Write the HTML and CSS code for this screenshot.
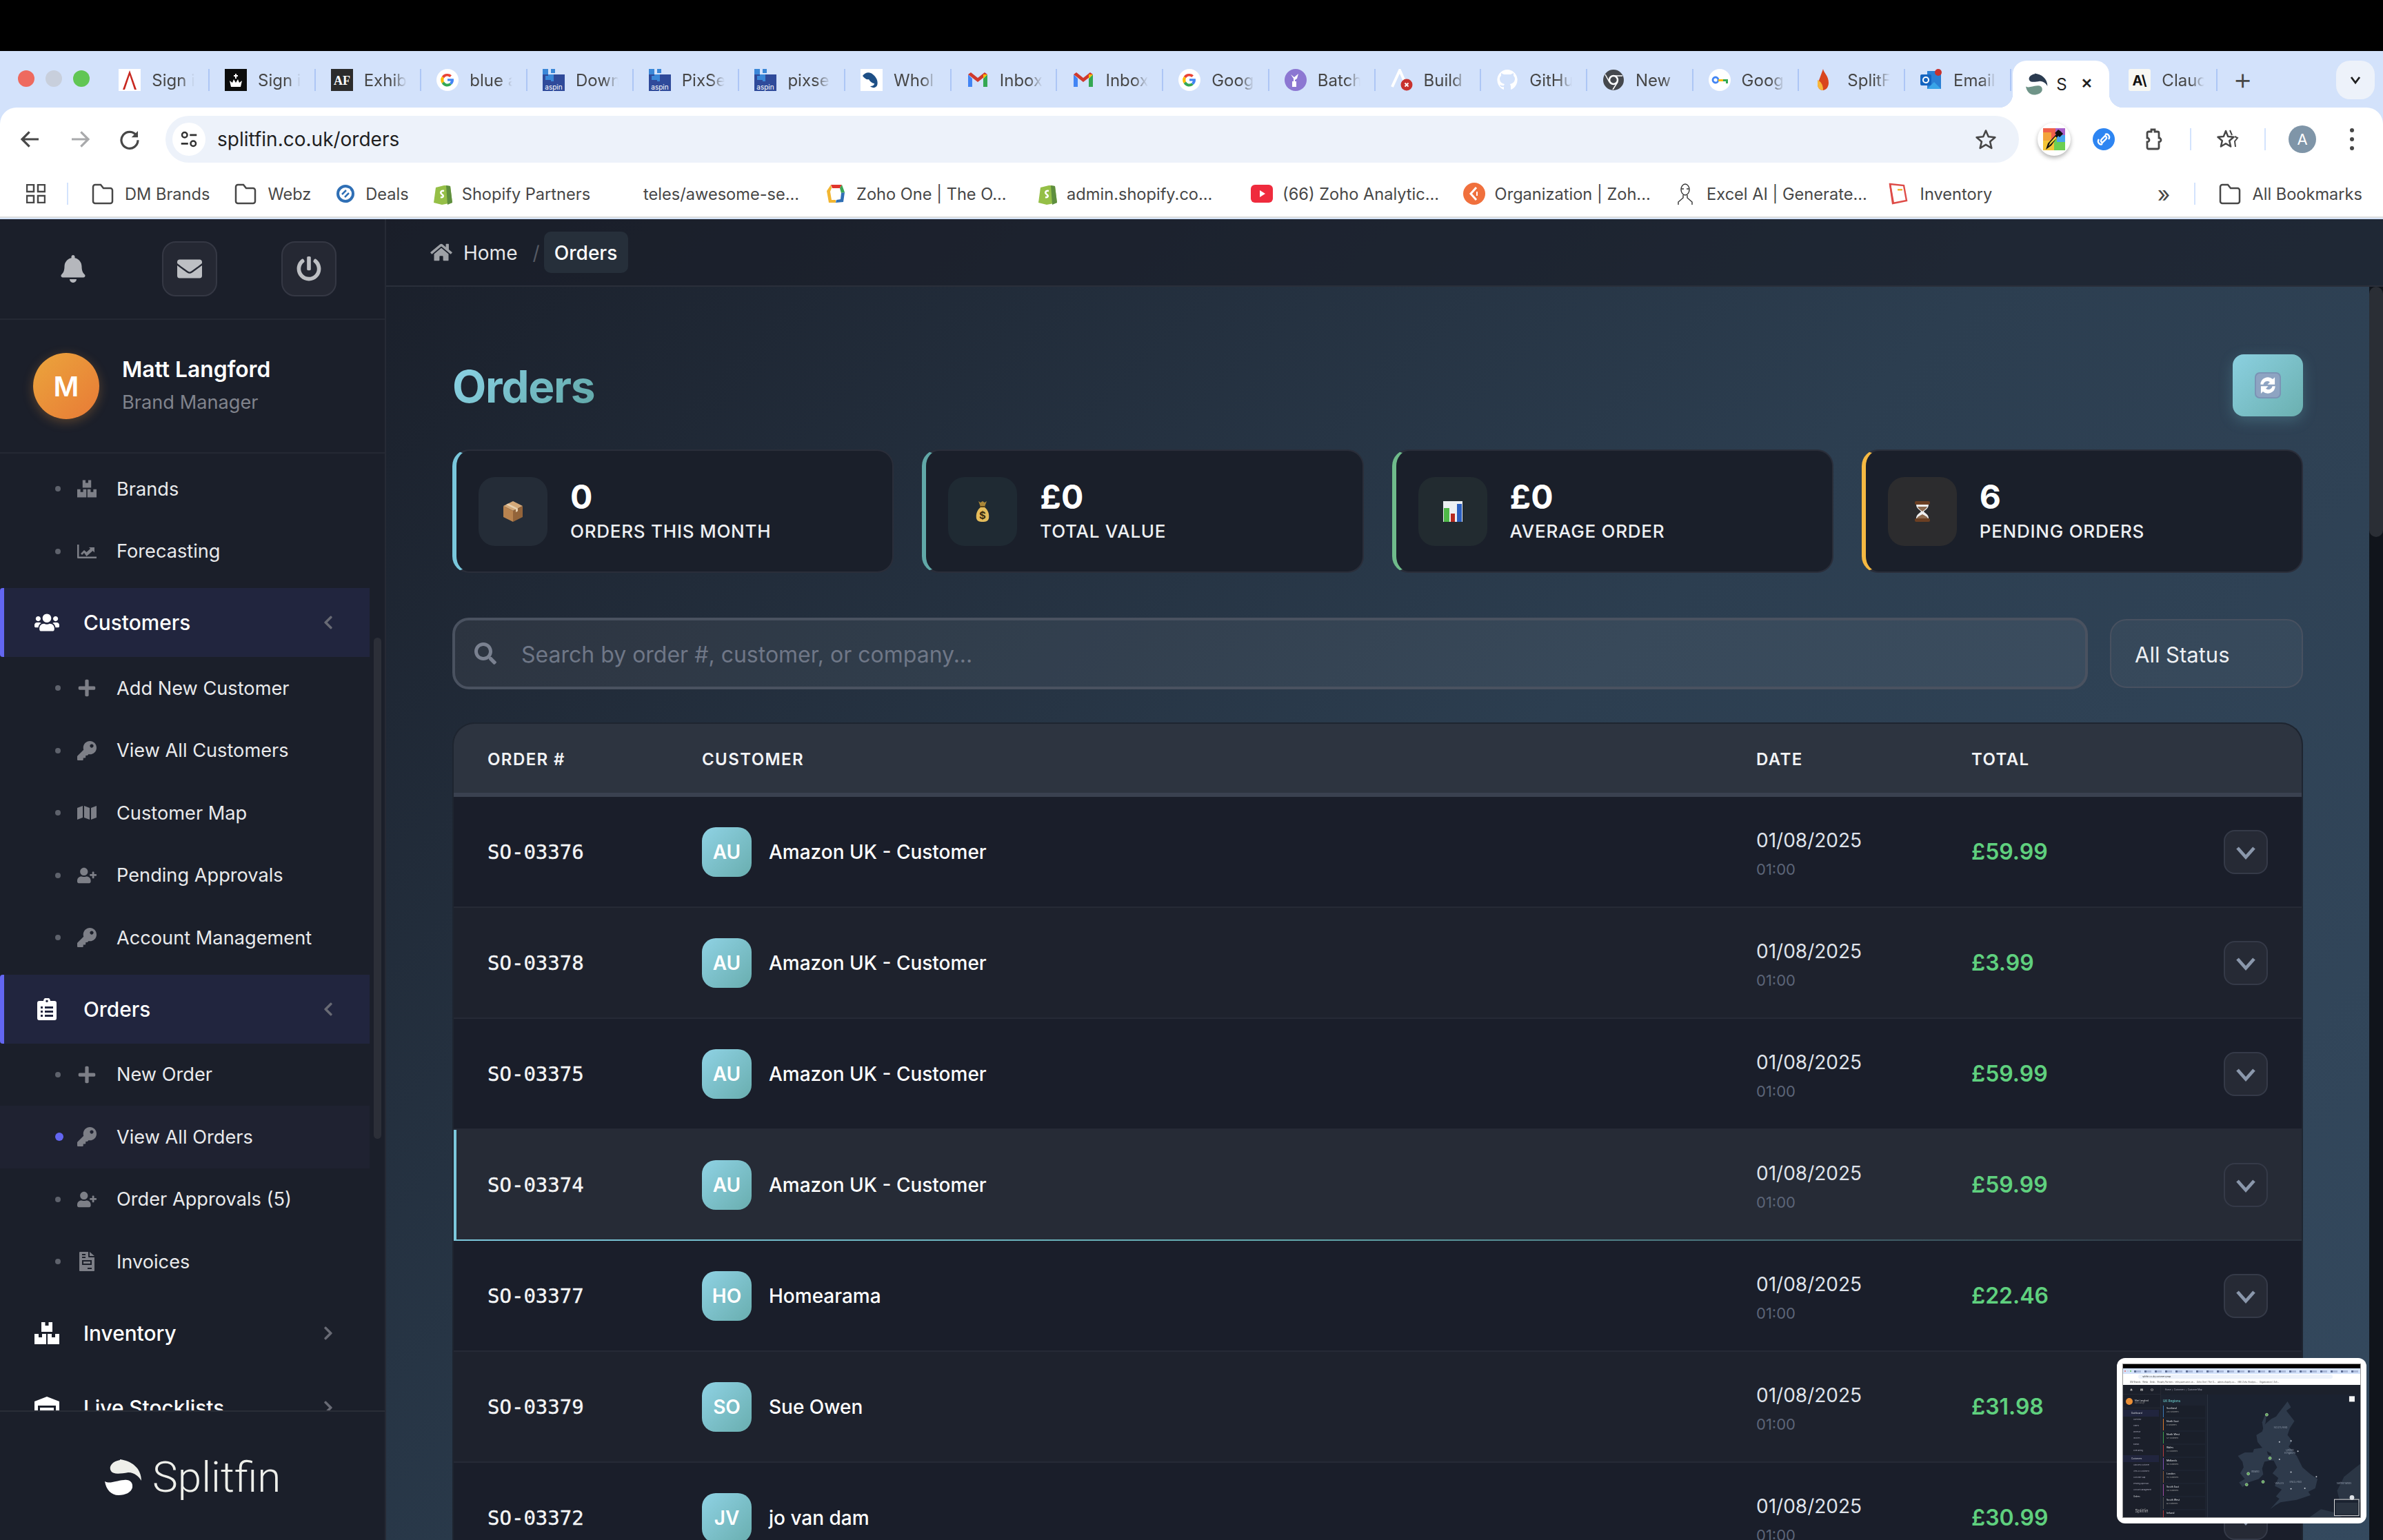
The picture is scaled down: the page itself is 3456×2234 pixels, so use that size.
FILE: index.html
```html
<!DOCTYPE html>
<html lang="en">
<head>
<meta charset="utf-8">
<title>Splitfin - Orders</title>
<link rel="stylesheet" href="styles.css">
</head>
<body>
<svg class="sprite" xmlns="http://www.w3.org/2000/svg">
  <symbol id="i-bell" viewBox="0 0 448 512"><path d="M224 512c35.32 0 63.97-28.65 63.97-64H160.03c0 35.35 28.65 64 63.97 64zm215.39-149.71c-19.32-20.76-55.47-51.99-55.47-154.29 0-77.7-54.48-139.9-127.94-155.16V32c0-17.67-14.32-32-31.98-32s-31.98 14.33-31.98 32v20.84C118.56 68.1 64.08 130.3 64.08 208c0 102.3-36.15 133.53-55.47 154.29-6 6.45-8.66 14.16-8.61 21.71.11 16.4 12.98 32 32.1 32h383.8c19.12 0 32-15.6 32.1-32 .05-7.55-2.61-15.27-8.61-21.71z"/></symbol>
  <symbol id="i-mail" viewBox="0 0 512 512"><path d="M502.3 190.8c3.9-3.1 9.7-.2 9.7 4.7V400c0 26.5-21.5 48-48 48H48c-26.5 0-48-21.5-48-48V195.6c0-5 5.7-7.8 9.7-4.7 22.4 17.4 52.1 39.5 154.1 113.6 21.1 15.4 56.7 47.8 92.2 47.6 35.7.3 72-32.8 92.3-47.6 102-74.1 131.6-96.3 154-113.7zM256 320c23.2.4 56.6-29.2 73.4-41.4 132.7-96.3 142.8-104.7 173.4-128.7 5.8-4.5 9.2-11.5 9.2-18.9v-19c0-26.5-21.5-48-48-48H48C21.5 64 0 85.5 0 112v19c0 7.4 3.4 14.3 9.2 18.9 30.6 23.9 40.7 32.4 173.4 128.7 16.8 12.2 50.2 41.8 73.4 41.4z"/></symbol>
  <symbol id="i-power" viewBox="0 0 512 512"><path d="M400 54.1c63 45 104 118.6 104 201.9 0 136.8-110.8 247.7-247.5 248C120 504.3 8.2 393 8 256.4 7.9 173.1 48.9 99.3 111.8 54.2c11.7-8.3 28-4.8 35 7.7L162.6 90c5.9 10.5 3.1 23.8-6.6 31-41.5 30.8-68 79.6-68 134.9-.1 92.3 74.5 168.1 168 168.1 91.6 0 168.6-74.2 168-169.1-.3-51.8-24.7-101.8-68.1-134-9.7-7.2-12.4-20.5-6.5-30.9l15.8-28.1c7-12.4 23.2-16.1 34.8-7.8zM296 264V24c0-13.3-10.7-24-24-24h-32c-13.3 0-24 10.7-24 24v240c0 13.3 10.7 24 24 24h32c13.3 0 24-10.7 24-24z"/></symbol>
  <symbol id="i-users" viewBox="0 0 640 512"><path d="M96 224c35.3 0 64-28.7 64-64s-28.7-64-64-64-64 28.7-64 64 28.7 64 64 64zm448 0c35.3 0 64-28.7 64-64s-28.7-64-64-64-64 28.7-64 64 28.7 64 64 64zm32 32h-64c-17.6 0-33.5 7.1-45.1 18.6 40.3 22.1 68.9 62 75.1 109.4h66c17.7 0 32-14.3 32-32v-32c0-35.3-28.7-64-64-64zm-256 0c61.9 0 112-50.1 112-112S381.9 32 320 32 208 82.1 208 144s50.1 112 112 112zm76.8 32h-8.3c-20.8 10-43.9 16-68.5 16s-47.6-6-68.5-16h-8.3C179.6 288 128 339.6 128 403.2V432c0 26.5 21.5 48 48 48h288c26.5 0 48-21.5 48-48v-28.8c0-63.6-51.6-115.2-115.2-115.2zm-223.7-13.4C161.5 263.1 145.6 256 128 256H64c-35.3 0-64 28.7-64 64v32c0 17.7 14.3 32 32 32h65.9c6.3-47.4 34.9-87.3 75.2-109.4z"/></symbol>
  <symbol id="i-key" viewBox="0 0 512 512"><path d="M512 176.001C512 273.203 433.202 352 336 352c-11.22 0-22.19-1.062-32.827-3.069l-24.012 27.014A23.999 23.999 0 0 1 261.223 384H224v40c0 13.255-10.745 24-24 24h-40v40c0 13.255-10.745 24-24 24H24c-13.255 0-24-10.745-24-24v-78.059c0-6.365 2.529-12.47 7.029-16.971l161.802-161.802C163.108 213.814 160 195.271 160 176 160 78.798 238.797.001 335.999 0 433.488-.001 512 78.511 512 176.001zM336 128c0 26.51 21.49 48 48 48s48-21.49 48-48-21.49-48-48-48-48 21.49-48 48z"/></symbol>
  <symbol id="i-plus" viewBox="0 0 448 512"><path d="M416 208H272V64c0-17.67-14.33-32-32-32h-32c-17.67 0-32 14.33-32 32v144H32c-17.67 0-32 14.33-32 32v32c0 17.67 14.33 32 32 32h144v144c0 17.67 14.33 32 32 32h32c17.67 0 32-14.33 32-32V304h144c17.67 0 32-14.33 32-32v-32c0-17.67-14.33-32-32-32z"/></symbol>
  <symbol id="i-userplus" viewBox="0 0 640 512"><path d="M624 208h-64v-64c0-8.8-7.2-16-16-16h-32c-8.8 0-16 7.2-16 16v64h-64c-8.8 0-16 7.2-16 16v32c0 8.8 7.2 16 16 16h64v64c0 8.8 7.2 16 16 16h32c8.8 0 16-7.2 16-16v-64h64c8.8 0 16-7.2 16-16v-32c0-8.8-7.2-16-16-16zm-400 48c70.7 0 128-57.3 128-128S294.7 0 224 0 96 57.3 96 128s57.3 128 128 128zm89.6 32h-16.7c-22.2 10.2-46.9 16-72.9 16s-50.6-5.8-72.9-16h-16.7C60.2 288 0 348.2 0 422.4V464c0 26.5 21.5 48 48 48h352c26.5 0 48-21.5 48-48v-41.6c0-74.2-60.2-134.4-134.4-134.4z"/></symbol>
  <symbol id="i-search" viewBox="0 0 512 512"><path d="M505 442.7L405.3 343c-4.5-4.5-10.6-7-17-7H372c27.6-35.3 44-79.7 44-128C416 93.1 322.9 0 208 0S0 93.1 0 208s93.1 208 208 208c48.3 0 92.7-16.4 128-44v16.3c0 6.4 2.5 12.5 7 17l99.7 99.7c9.4 9.4 24.6 9.4 33.9 0l28.3-28.3c9.4-9.4 9.4-24.6.1-34zM208 336c-70.7 0-128-57.2-128-128 0-70.7 57.2-128 128-128 70.7 0 128 57.2 128 128 0 70.7-57.2 128-128 128z"/></symbol>
  <symbol id="i-left" viewBox="0 0 320 512"><path d="M34.52 239.03L228.87 44.69c9.37-9.37 24.57-9.37 33.94 0l22.67 22.67c9.36 9.36 9.37 24.52.04 33.9L131.49 256l154.02 154.75c9.34 9.38 9.32 24.54-.04 33.9l-22.67 22.67c-9.37 9.37-24.57 9.37-33.94 0L34.52 272.97c-9.37-9.37-9.37-24.57 0-33.94z"/></symbol>
  <symbol id="i-right" viewBox="0 0 320 512"><path d="M285.48 272.97L91.13 467.31c-9.37 9.37-24.57 9.37-33.94 0l-22.67-22.67c-9.36-9.36-9.37-24.52-.04-33.9L188.51 256 34.48 101.25c-9.34-9.38-9.32-24.54.04-33.9l22.67-22.67c9.37-9.37 24.57-9.37 33.94 0l194.35 194.34c9.37 9.37 9.37 24.57 0 33.95z"/></symbol>
  <symbol id="i-home" viewBox="0 0 576 512"><path d="M280.37 148.26L96 300.11V464a16 16 0 0 0 16 16l112.06-.29a16 16 0 0 0 15.92-16V368a16 16 0 0 1 16-16h64a16 16 0 0 1 16 16v95.64a16 16 0 0 0 16 16.05L464 480a16 16 0 0 0 16-16V300L295.67 148.26a12.19 12.19 0 0 0-15.3 0zM571.6 251.47L488 182.56V44.05a12 12 0 0 0-12-12h-56a12 12 0 0 0-12 12v72.61L318.47 43a48 48 0 0 0-61 0L4.34 251.47a12 12 0 0 0-1.6 16.9l25.5 31A12 12 0 0 0 45.15 301l235.22-193.74a12.19 12.19 0 0 1 15.3 0L530.9 301a12 12 0 0 0 16.9-1.6l25.5-31a12 12 0 0 0-1.7-16.93z"/></symbol>
  <symbol id="i-boxes" viewBox="0 0 36 32"><path fill-rule="evenodd" d="M10 0h16v14H10zM15.500 0v5h5V0zM0 17h17v15H0zM6 17v5h5v-5zM19 17h17v15H19zM25 17v5h5v-5z"/></symbol>
  <symbol id="i-chart" viewBox="0 0 28 20"><path d="M0 0h2.500v17.500H28V20H1a1 1 0 0 1-1-1z"/><path d="M5 13l5-5 3.500 3L19 6l-2-2h8v7.500l-2.500-2.500-9 8L10 12l-3 3z"/></symbol>
  <symbol id="i-map" viewBox="0 0 28 20"><path d="M0 3l8-3v17l-8 3zM10 0l8 3v17l-8-3zM20 3l8-3v17l-8 3z"/></symbol>
  <symbol id="i-invoice" viewBox="0 0 22 28"><path fill-rule="evenodd" d="M1 0h12v7a1 1 0 0 0 1 1h8v19a1 1 0 0 1-1 1H1a1 1 0 0 1-1-1V1a1 1 0 0 1 1-1zM4 3v2h5V3zM4 7v2h5V7zM4 12v7h14v-7zM6 14h10v3H6zM12 23v2h6v-2zM15 0l7 6h-7z"/></symbol>
  <symbol id="i-clip" viewBox="0 0 28 32"><path fill-rule="evenodd" d="M3 4h6a5 5 0 0 1 10 0h6a3 3 0 0 1 3 3v22a3 3 0 0 1-3 3H3a3 3 0 0 1-3-3V7a3 3 0 0 1 3-3zM14 2.500a1.800 1.800 0 1 0 0 3.600 1.800 1.800 0 0 0 0-3.600zM5 12v3h3v-3zM11 12v3h12v-3zM5 18v3h3v-3zM11 18v3h12v-3zM5 24v3h3v-3zM11 24v3h12v-3z"/></symbol>
  <symbol id="i-warehouse" viewBox="0 0 36 32"><path fill-rule="evenodd" d="M18 0l18 7v25h-5V13H5v19H0V7zM8 16h20v4H8zM8 23h20v4H8z"/></symbol>
  <symbol id="i-folder" viewBox="0 0 32 32"><path d="M5 3h8l4 5h10a3 3 0 0 1 3 3v16a3 3 0 0 1-3 3H5a3 3 0 0 1-3-3V6a3 3 0 0 1 3-3z" fill="none" stroke="#474747" stroke-width="2.500"/></symbol>
  <symbol id="i-star" viewBox="0 0 32 32"><path d="M16 3.500l3.800 8.800 9.600.9-7.300 6.300 2.200 9.400L16 23.900l-8.300 5 2.200-9.400-7.300-6.300 9.600-.9z" fill="none" stroke="#474747" stroke-width="2.600" stroke-linejoin="round"/></symbol>
  <symbol id="f-google" viewBox="0 0 32 32"><circle cx="16" cy="16" r="16" fill="#fff"/><path d="M16 7a9 9 0 0 1 6 2.300l-2.600 2.600A5.300 5.300 0 0 0 11 13.300L7.800 11A9 9 0 0 1 16 7z" fill="#ea4335"/><path d="M7.800 11l3.200 2.400a5.300 5.300 0 0 0 0 5.200L7.800 21a9 9 0 0 1 0-10z" fill="#fbbc05"/><path d="M7.800 21l3.200-2.400a5.300 5.300 0 0 0 8 1.800l3 2.400A9 9 0 0 1 7.800 21z" fill="#34a853"/><path d="M25 16c0 2.700-1 5-3 6.800l-3-2.400a4.300 4.300 0 0 0 1.800-2.800H16v-3.400h8.800c.1.500.2 1.100.2 1.800z" fill="#4285f4"/></symbol>
  <symbol id="f-aspin" viewBox="0 0 32 32"><rect y="8" width="32" height="24" fill="#2f4a9a"/><path d="M0 0h8v8H0zM8 8h8v8H8zM12 0h6v6h-6zM4 10h4v6H4zM12 14h4v4h-4z" fill="#3a87d8"/><text x="16" y="30" font-size="10" font-family="Inter,sans-serif" fill="#fff" text-anchor="middle">aspin</text></symbol>
  <symbol id="f-gmail" viewBox="0 0 32 32"><path d="M2 8v18h6V14z" fill="#4285f4"/><path d="M24 14v12h6V8z" fill="#34a853"/><path d="M2 8l14 11L30 8l-4-3-10 8L6 5z" fill="#d0392d"/><path d="M24 8l6 0-6 6z" fill="#fbbc05"/></symbol>
  <symbol id="f-spl" viewBox="0 0 54 52"><path d="M22 0C38 2 53 12 53 31 50 26 44 19 34 19 22 21 12 22 9 17 5 10 11 3 22 1z" fill="#2b3b50"/><path d="M0 32C8 36 15 31 28 30 36 29 41 33 40 41 38 48 30 52 20 52 9 52 2 44 0 32z" fill="#6f9488"/></symbol>
  <symbol id="l-spl" viewBox="0 0 54 52"><path d="M22 0C38 2 53 12 53 31 50 26 44 19 34 19 22 21 12 22 9 17 5 10 11 3 22 1z" fill="#eeefea"/><path d="M0 32C8 36 15 31 28 30 36 29 41 33 40 41 38 48 30 52 20 52 9 52 2 44 0 32z" fill="#fff"/></symbol>
  <symbol id="f-shopify" viewBox="0 0 28 32"><path d="M4 7l12-3 3 0 6 1 3 24-15 3L1 29z" fill="#95bf47"/><path d="M19 4l6 1 3 24-7 3z" fill="#5e8e3e"/><path d="M16 12c-5-1-6 3-3 5 3 2 2 5-2 4" fill="none" stroke="#fff" stroke-width="2.500"/></symbol>
  <symbol id="i-down" viewBox="0 0 20 20"><path d="M2 6l8 9 8-9" fill="none" stroke="#8a97ab" stroke-width="3.200"/></symbol>
</svg>

<header class="chrome">
  <div class="black-bar"></div>
  <div class="tabstrip">
    <div class="traffic"><i class="tl red"></i><i class="tl grey"></i><i class="tl green"></i></div>
    <div class="tab"><svg class="fav" viewBox="0 0 32 32"><rect width="32" height="32" fill="#fff"/><path d="M16 2L6 30h3L16 9l7 21h3z" fill="#c8281f"/></svg><span class="tab-title">Sign i</span></div>
    <div class="tab"><svg class="fav" viewBox="0 0 32 32"><rect width="32" height="32" fill="#0b0c0c"/><path d="M7 17l4 3 2-5 3 5 3-5 2 5 4-3-2 9H9z" fill="#fff"/><path d="M15 7h2v2h2v2h-2v3h-2v-3h-2V9h2z" fill="#fff"/></svg><span class="tab-title">Sign i</span></div>
    <div class="tab"><svg class="fav" viewBox="0 0 32 32"><rect width="32" height="32" fill="#2c2c2c"/><text x="16" y="23" font-size="18" font-weight="700" font-family="Liberation Serif,serif" fill="#fff" text-anchor="middle">AF</text></svg><span class="tab-title">Exhib</span></div>
    <div class="tab"><svg class="fav"><use href="#f-google"/></svg><span class="tab-title">blue a</span></div>
    <div class="tab"><svg class="fav"><use href="#f-aspin"/></svg><span class="tab-title">Down</span></div>
    <div class="tab"><svg class="fav"><use href="#f-aspin"/></svg><span class="tab-title">PixSe</span></div>
    <div class="tab"><svg class="fav"><use href="#f-aspin"/></svg><span class="tab-title">pixse</span></div>
    <div class="tab"><svg class="fav" viewBox="0 0 32 32"><rect width="32" height="32" fill="#fff"/><path d="M3 10C7 4 14 4 18 8c5 4 8 10 6 16-2 4-7 4-10 1 3 0 6-1 6-4-2 0-6-2-8-6-3 1-6-1-9-5z" fill="#1d4f86"/></svg><span class="tab-title">Whol</span></div>
    <div class="tab"><svg class="fav"><use href="#f-gmail"/></svg><span class="tab-title">Inbox</span></div>
    <div class="tab"><svg class="fav"><use href="#f-gmail"/></svg><span class="tab-title">Inbox</span></div>
    <div class="tab"><svg class="fav"><use href="#f-google"/></svg><span class="tab-title">Goog</span></div>
    <div class="tab"><svg class="fav" viewBox="0 0 32 32"><circle cx="16" cy="16" r="16" fill="#8c77d2"/><path d="M9 8l5 4 6-5-2 7-3 2v3h-2v-5z" fill="#fff"/><rect x="11" y="18" width="6" height="8" fill="#fff"/></svg><span class="tab-title">Batch</span></div>
    <div class="tab"><svg class="fav" viewBox="0 0 32 32"><path d="M2 26L13 2l8 18" fill="none" stroke="#fff" stroke-width="4"/><circle cx="23" cy="23" r="8.500" fill="#c8322e"/><path d="M20.500 20.500l5 5m0-5l-5 5" stroke="#fff" stroke-width="1.800"/></svg><span class="tab-title">Build</span></div>
    <div class="tab"><svg class="fav" viewBox="0 0 32 32"><path fill-rule="evenodd" d="M16 1a15 15 0 0 0-5 29v-4c-4 1-5-1-6-3 2 0 3 2 6 1l1-2c-4-1-7-3-7-8 0-2 1-3 2-4V6l4 2h10l4-2v4c1 1 2 2 2 4 0 5-3 7-7 8l1 3v5A15 15 0 0 0 16 1z" fill="#fff"/></svg><span class="tab-title">GitHu</span></div>
    <div class="tab"><svg class="fav" viewBox="0 0 32 32"><circle cx="16" cy="16" r="15" fill="#45484d"/><circle cx="16" cy="16" r="6" fill="none" stroke="#fff" stroke-width="2.500"/><path d="M16 10h13M10 19L4 8M22 19l-7 11" stroke="#fff" stroke-width="1.500"/></svg><span class="tab-title">New</span></div>
    <div class="tab"><svg class="fav" viewBox="0 0 32 32"><circle cx="16" cy="16" r="16" fill="#fff"/><circle cx="10" cy="16" r="4" fill="none" stroke="#4285f4" stroke-width="2.800"/><path d="M14 15h7v3h-7z" fill="#fbbc05"/><path d="M21 15h7v6h-3v-3h-4z" fill="#34a853"/></svg><span class="tab-title">Goog</span></div>
    <div class="tab"><svg class="fav" viewBox="0 0 32 32"><path d="M13 0c1 6 8 10 8 20 0 6-3 10-8 11-5 0-8-4-8-9z" fill="#d9461e"/><path d="M5 16c4 2 8 6 8 15-5 0-8-4-8-8z" fill="#f7b73a"/></svg><span class="tab-title">SplitF</span></div>
    <div class="tab"><svg class="fav" viewBox="0 0 32 32"><rect x="10" y="3" width="20" height="26" fill="#2a7fd4"/><rect y="8" width="16" height="16" rx="2" fill="#1464c0"/><circle cx="8" cy="16" r="4" fill="none" stroke="#fff" stroke-width="2"/><path d="M10 29l10-10 10 10z" fill="#38a4e8"/><circle cx="26" cy="5" r="5" fill="#c8322e"/></svg><span class="tab-title">Email</span></div>
    <div class="tab tab-active"><svg class="fav fav-active"><use href="#f-spl"/></svg><span class="tab-title-active">S</span><span class="tab-x">&#10005;</span></div>
    <div class="tab tab-claude"><svg class="fav" viewBox="0 0 32 32"><rect width="32" height="32" rx="3" fill="#f8f8f3"/><text x="16" y="24" font-size="20" font-weight="700" font-family="Inter,sans-serif" fill="#111" text-anchor="middle">A\</text></svg><span class="tab-title">Clauc</span></div>
    <span class="tab-plus">+</span>
    <div class="tab-menu"><svg viewBox="0 0 20 20" class="tab-menu-ico"><path d="M4 6l6 8 6-8" fill="none" stroke="#1f1f1f" stroke-width="2.800"/></svg></div>
  </div>
  <div class="toolbar">
    <div class="navbtn"><svg viewBox="0 0 24 24" class="nav-ico"><path d="M21 12H4M11 4l-8 8 8 8" fill="none" stroke="#474747" stroke-width="2.400"/></svg></div>
    <div class="navbtn"><svg viewBox="0 0 24 24" class="nav-ico"><path d="M3 12h17M13 4l8 8-8 8" fill="none" stroke="#a8a9ab" stroke-width="2.400"/></svg></div>
    <div class="navbtn"><svg viewBox="0 0 24 24" class="nav-ico"><path d="M19.500 8A9 9 0 1 0 21 13" fill="none" stroke="#474747" stroke-width="2.400"/><path d="M21 3v7h-7z" fill="#474747"/></svg></div>
    <div class="urlbar">
      <span class="tune"><svg viewBox="0 0 24 24" class="tune-ico"><circle cx="7" cy="7" r="3" fill="none" stroke="#333" stroke-width="2"/><path d="M13 7h8M3 17h8" stroke="#333" stroke-width="2.200"/><circle cx="17" cy="17" r="3" fill="none" stroke="#333" stroke-width="2"/></svg></span>
      <span class="url">splitfin.co.uk/orders</span>
      <svg class="tb-star"><use href="#i-star"/></svg>
    </div>
    <div class="ext-row">
      <span class="ext"><span class="ext-colorpick"><svg viewBox="0 0 32 32" class="fav"><rect width="32" height="16" fill="#f0604a"/><rect x="0" y="16" width="16" height="16" fill="#f4c538"/><rect x="16" y="16" width="16" height="16" fill="#6ccf52"/><rect x="0" y="6" width="12" height="12" fill="#f3a33a"/><rect x="18" y="0" width="14" height="10" fill="#a861c9"/><rect x="20" y="10" width="12" height="10" fill="#47a5ee"/><path d="M4 31l3-9L19 9l-2-2 5-5 3 2 4 4-5 5-2-2L12 25z" fill="#111"/><path d="M8 26l2-5 8-9 2 2-9 9z" fill="#f6d838"/></svg></span></span>
      <span class="ext"><svg viewBox="0 0 32 32" class="fav"><circle cx="16" cy="16" r="16" fill="#2d85f2"/><path d="M19 10l-6 6c-2 2-1 5 2 5M13 22l6-6c2-2 1-5-2-5M9 16c-3 4 1 9 5 7M23 16c3-4-1-9-5-7" fill="none" stroke="#fff" stroke-width="2.400"/></svg></span>
      <span class="ext"><svg viewBox="0 0 32 32" class="fav"><path d="M9 5h4V2h5v3h4a2 2 0 0 1 2 2v7a3 3 0 0 1 0 6v8a2 2 0 0 1-2 2H9a2 2 0 0 1-2-2v-8a3 3 0 0 0 0-6V7a2 2 0 0 1 2-2z" fill="none" stroke="#474747" stroke-width="2.800"/></svg></span>
      <span class="tb-sep"></span>
      <span class="ext"><svg viewBox="0 0 32 32" class="fav"><path d="M13 4l3.200 8 8.300.8-6.300 5.500 1.900 8.200L13 22.200l-7.100 4.300 1.900-8.200L1.500 12.800l8.300-.8z" fill="none" stroke="#474747" stroke-width="2.500" stroke-linejoin="round"/><path d="M19 3l3 7M26 12l4 2-4 5 1 8" fill="none" stroke="#474747" stroke-width="2"/></svg></span>
      <span class="tb-sep"></span>
      <span class="ext"><span class="acct">A</span></span>
      <span class="ext"><span class="dots"><i></i><i></i><i></i></span></span>
    </div>
  </div>
  <div class="bookmarks">
    <svg viewBox="0 0 28 28" class="apps"><path d="M1 1h10v10H1zM17 1h10v10H17zM1 17h10v10H1zM17 17h10v10H17z" fill="none" stroke="#474747" stroke-width="2.500"/></svg>
    <span class="bm-sep"></span>
    <div class="bm"><svg class="fav"><use href="#i-folder"/></svg><span>DM Brands</span></div>
    <div class="bm"><svg class="fav"><use href="#i-folder"/></svg><span>Webz</span></div>
    <div class="bm bm-deals"><svg class="fav-sh" viewBox="0 0 28 32"><circle cx="14" cy="16" r="11" fill="none" stroke="#2f6fb5" stroke-width="4"/><path d="M7 21L20 9M12 23L22 14" stroke="#fff" stroke-width="3"/><path d="M9 17l6-6M13 21l6-6" stroke="#2f6fb5" stroke-width="2.500"/></svg><span>Deals</span></div>
    <div class="bm bm-shop"><svg class="fav-sh"><use href="#f-shopify"/></svg><span>Shopify Partners</span></div>
    <div class="bm bm-long"><span class="fav"></span><span>teles/awesome-se...</span></div>
    <div class="bm bm-long"><svg class="fav" viewBox="0 0 32 32"><path d="M9 3h16l-3 5H11z" fill="#e0352c"/><path d="M25 3l4 11-5 1-2-7z" fill="#3aa655"/><path d="M29 14l-2 14-11 1 1-4 6-1 1-9z" fill="#2f6fb5"/><path d="M9 3l-6 9 3 17 10 0 0-4-6 0-2-12 2-5z" fill="#f2b632"/></svg><span>Zoho One | The O...</span></div>
    <div class="bm bm-long"><svg class="fav-sh"><use href="#f-shopify"/></svg><span>admin.shopify.co...</span></div>
    <div class="bm bm-long bm-tight"><svg class="fav" viewBox="0 0 32 32"><rect y="3" width="32" height="26" rx="6" fill="#ef2b3d"/><path d="M13 11l8 5-8 5z" fill="#fff"/></svg><span>(66) Zoho Analytic...</span></div>
    <div class="bm bm-long bm-tight"><svg class="fav" viewBox="0 0 32 32"><circle cx="16" cy="16" r="16" fill="#f0703d"/><path d="M19 7l-8 9 8 9" fill="none" stroke="#fff" stroke-width="3"/><path d="M20 13v6" stroke="#fff" stroke-width="2"/></svg><span>Organization | Zoh...</span></div>
    <div class="bm bm-long bm-tight"><svg class="fav" viewBox="0 0 32 32"><ellipse cx="15" cy="10" rx="6" ry="8" fill="#fff" stroke="#333" stroke-width="1.400"/><path d="M12 18v4L5 28v4M18 18v4l7 6v4M10 9h3M17 9h3" fill="none" stroke="#333" stroke-width="1.400"/></svg><span>Excel AI | Generate...</span></div>
    <div class="bm"><svg class="fav" viewBox="0 0 32 32"><path d="M4 2l20 2 4 22-20 4z" fill="none" stroke="#de4c48" stroke-width="2.400"/><path d="M4 2l5 28" stroke="#de4c48" stroke-width="2.400"/><rect x="15" y="9" width="7" height="2.500" fill="#f2b632"/></svg><span>Inventory</span></div>
    <div class="bm-end">
      <span class="bm-more">&#187;</span>
      <span class="bm-sep"></span>
      <div class="bm"><svg class="fav"><use href="#i-folder"/></svg><span>All Bookmarks</span></div>
    </div>
  </div>
</header>

<div class="app">
  <aside class="sidebar">
    <div class="side-top">
      <span class="top-btn top-plain"><svg class="ico-bell"><use href="#i-bell"/></svg></span>
      <span class="top-btn"><svg class="ico-top"><use href="#i-mail"/></svg></span>
      <span class="top-btn"><svg class="ico-top"><use href="#i-power"/></svg></span>
    </div>
    <div class="profile">
      <div class="avatar">M</div>
      <div>
        <div class="p-name">Matt Langford</div>
        <div class="p-role">Brand Manager</div>
      </div>
    </div>
    <nav class="nav">
      <a class="sub"><i class="dot"></i><svg class="sub-ico"><use href="#i-boxes"/></svg><span>Brands</span></a>
      <a class="sub"><i class="dot"></i><svg class="sub-ico"><use href="#i-chart"/></svg><span>Forecasting</span></a>
      <a class="group open"><svg class="g-ico"><use href="#i-users"/></svg><span>Customers</span><svg class="chev"><use href="#i-left"/></svg></a>
      <a class="sub"><i class="dot"></i><svg class="sub-ico"><use href="#i-plus"/></svg><span>Add New Customer</span></a>
      <a class="sub"><i class="dot"></i><svg class="sub-ico"><use href="#i-key"/></svg><span>View All Customers</span></a>
      <a class="sub"><i class="dot"></i><svg class="sub-ico"><use href="#i-map"/></svg><span>Customer Map</span></a>
      <a class="sub"><i class="dot"></i><svg class="sub-ico"><use href="#i-userplus"/></svg><span>Pending Approvals</span></a>
      <a class="sub"><i class="dot"></i><svg class="sub-ico"><use href="#i-key"/></svg><span>Account Management</span></a>
      <a class="group open"><svg class="g-ico"><use href="#i-clip"/></svg><span>Orders</span><svg class="chev"><use href="#i-left"/></svg></a>
      <a class="sub"><i class="dot"></i><svg class="sub-ico"><use href="#i-plus"/></svg><span>New Order</span></a>
      <a class="sub sub-active"><i class="dot"></i><svg class="sub-ico"><use href="#i-key"/></svg><span>View All Orders</span></a>
      <a class="sub"><i class="dot"></i><svg class="sub-ico"><use href="#i-userplus"/></svg><span>Order Approvals (5)</span></a>
      <a class="sub"><i class="dot"></i><svg class="sub-ico"><use href="#i-invoice"/></svg><span>Invoices</span></a>
      <a class="group"><svg class="g-ico"><use href="#i-boxes"/></svg><span>Inventory</span><svg class="chev"><use href="#i-right"/></svg></a>
      <a class="group"><svg class="g-ico"><use href="#i-warehouse"/></svg><span>Live Stocklists</span><svg class="chev"><use href="#i-right"/></svg></a>
      <div class="nav-thumb"></div>
    </nav>
    <div class="side-foot">
      <svg class="logo-mark"><use href="#l-spl"/></svg>
      <span class="logo-text">Splitfin</span>
    </div>
  </aside>

  <main class="main">
    <div class="crumbs">
      <svg class="crumb-home"><use href="#i-home"/></svg>
      <span class="crumb-link">Home</span>
      <span class="crumb-sep">/</span>
      <span class="crumb-now">Orders</span>
    </div>
    <div class="scroller">
      <div class="content">
        <div class="title-row">
          <h1 class="title">Orders</h1>
          <button class="refresh"><svg viewBox="0 0 32 32" class="emoji-r"><rect width="32" height="32" rx="6" fill="#7a92b4"/><rect x="1.500" y="1.500" width="29" height="29" rx="5" fill="#8ea4c2"/><path d="M7 15a9 9 0 0 1 15-6.500l2.500-2.500v9h-9l3-3a5 5 0 0 0-8 3zM25 17a9 9 0 0 1-15 6.500L7.500 26v-9h9l-3 3a5 5 0 0 0 8-3z" fill="#fff"/></svg></button>
        </div>
        <section class="stats">
          <div class="stat s-blue">
            <div class="stat-ico"><svg viewBox="0 0 32 32" class="emoji"><path d="M16 1L30 8 16 15 2 8z" fill="#d3a878"/><path d="M2 8l14 7v16L2 24z" fill="#b8834f"/><path d="M30 8L16 15v16l14-7z" fill="#93643a"/><path d="M9 4.500l14 7v4l-3 1.500v-4L6 6z" fill="#e6cfae"/></svg></div>
            <div><div class="stat-val">0</div><div class="stat-lab">ORDERS THIS MONTH</div></div>
          </div>
          <div class="stat s-teal">
            <div class="stat-ico"><svg viewBox="0 0 32 32" class="emoji"><path d="M10 1l3 2 3-2 3 2 3-2-3 8h-6z" fill="#a98638"/><rect x="12" y="8" width="8" height="2" fill="#5a4418"/><path d="M13 10h6c5 4 7 10 6 16-1 4-4 5-9 5s-8-1-9-5c-1-6 1-12 6-16z" fill="#e5bd5c"/><text x="16" y="27" font-size="15" font-weight="700" font-family="Inter,sans-serif" fill="#3b2d10" text-anchor="middle">$</text></svg></div>
            <div><div class="stat-val">£0</div><div class="stat-lab">TOTAL VALUE</div></div>
          </div>
          <div class="stat s-green">
            <div class="stat-ico"><svg viewBox="0 0 32 32" class="emoji"><rect x="2" y="1" width="28" height="30" fill="#eceff3"/><rect x="3" y="11" width="8" height="20" fill="#4fb848"/><rect x="13" y="19" width="6" height="12" fill="#b72a1f"/><rect x="22" y="5" width="7" height="26" fill="#2b5fc0"/></svg></div>
            <div><div class="stat-val">£0</div><div class="stat-lab">AVERAGE ORDER</div></div>
          </div>
          <div class="stat s-amber">
            <div class="stat-ico"><svg viewBox="0 0 32 32" class="emoji"><rect x="5" y="1" width="22" height="5" rx="2" fill="#6b3f22"/><rect x="5" y="26" width="22" height="5" rx="2" fill="#6b3f22"/><path d="M7 6h18c0 6-6 8-7 10 1 2 7 4 7 10H7c0-6 6-8 7-10-1-2-7-4-7-10z" fill="#f0f0f0"/><path d="M9 9h14c-1 3-5 5-7 7-2-2-6-4-7-7zM8 26c1-3 5-4 8-6 3 2 7 3 8 6z" fill="#8d6a4e"/></svg></div>
            <div><div class="stat-val">6</div><div class="stat-lab">PENDING ORDERS</div></div>
          </div>
        </section>
        <section class="filters">
          <div class="search"><svg class="search-ico"><use href="#i-search"/></svg><span class="search-ph">Search by order #, customer, or company...</span></div>
          <div class="status">All Status</div>
        </section>
        <section class="table">
          <div class="row head"><span>ORDER #</span><span>CUSTOMER</span><span>DATE</span><span>TOTAL</span><span></span></div>
          <div class="row"><span class="ono">SO-03376</span><div class="cust"><span class="cav">AU</span><span>Amazon UK - Customer</span></div><div class="when"><div class="d">01/08/2025</div><div class="t">01:00</div></div><span class="amt">£59.99</span><span class="exp"><svg><use href="#i-down"/></svg></span></div>
          <div class="row alt"><span class="ono">SO-03378</span><div class="cust"><span class="cav">AU</span><span>Amazon UK - Customer</span></div><div class="when"><div class="d">01/08/2025</div><div class="t">01:00</div></div><span class="amt">£3.99</span><span class="exp"><svg><use href="#i-down"/></svg></span></div>
          <div class="row"><span class="ono">SO-03375</span><div class="cust"><span class="cav">AU</span><span>Amazon UK - Customer</span></div><div class="when"><div class="d">01/08/2025</div><div class="t">01:00</div></div><span class="amt">£59.99</span><span class="exp"><svg><use href="#i-down"/></svg></span></div>
          <div class="row hover"><span class="ono">SO-03374</span><div class="cust"><span class="cav">AU</span><span>Amazon UK - Customer</span></div><div class="when"><div class="d">01/08/2025</div><div class="t">01:00</div></div><span class="amt">£59.99</span><span class="exp"><svg><use href="#i-down"/></svg></span></div>
          <div class="row"><span class="ono">SO-03377</span><div class="cust"><span class="cav">HO</span><span>Homearama</span></div><div class="when"><div class="d">01/08/2025</div><div class="t">01:00</div></div><span class="amt">£22.46</span><span class="exp"><svg><use href="#i-down"/></svg></span></div>
          <div class="row alt"><span class="ono">SO-03379</span><div class="cust"><span class="cav">SO</span><span>Sue Owen</span></div><div class="when"><div class="d">01/08/2025</div><div class="t">01:00</div></div><span class="amt">£31.98</span><span class="exp"><svg><use href="#i-down"/></svg></span></div>
          <div class="row"><span class="ono">SO-03372</span><div class="cust"><span class="cav">JV</span><span>jo van dam</span></div><div class="when"><div class="d">01/08/2025</div><div class="t">01:00</div></div><span class="amt">£30.99</span><span class="exp"><svg><use href="#i-down"/></svg></span></div>
        </section>
      </div>
      <div class="vbar"><div class="vthumb"></div></div>
    </div>
  </main>
</div>

<aside class="pip">
  <div class="pip-in">
    <div class="m-black"></div>
    <div class="m-tabs"><i class="m-r"></i><i class="m-y"></i><i class="m-g"></i><span class="m-tabline"></span></div>
    <div class="m-url"><span class="m-urlin">splitfin.co.uk/customers/map</span></div>
    <div class="m-bm">DM Brands &nbsp; Webz &nbsp; Deals &nbsp; Shopify Partners &nbsp; teles/awesome-se... &nbsp; Zoho One | The O... &nbsp; admin.shopify.co... &nbsp; (66) Zoho Analytic... &nbsp; Organization | Zoh...</div>
    <div class="m-app">
      <div class="m-side">
        <div class="m-top"><svg class="m-ti"><use href="#i-bell"/></svg><svg class="m-ti"><use href="#i-mail"/></svg><svg class="m-ti"><use href="#i-power"/></svg></div>
        <div class="m-prof"><i class="m-av"></i><div><div class="m-n">Matt Langford</div><div class="m-rr">Brand Manager</div></div></div>
        <div class="m-g-row">Dashboard</div>
        <div class="m-s">Overview</div><div class="m-s">Orders</div><div class="m-s">Revenue</div><div class="m-s">Invoices</div><div class="m-s">Brands</div><div class="m-s">Forecasting</div>
        <div class="m-g-row">Customers</div>
        <div class="m-s">Add New Customer</div><div class="m-s">View All Customers</div><div class="m-s">Customer Map</div><div class="m-s">Pending Approvals</div><div class="m-s">Account Management</div>
        <div class="m-o">Orders</div>
        <div class="m-logo">Splitfin</div>
      </div>
      <div class="m-right">
        <div class="m-crumb">Home &nbsp;/&nbsp; Customers &nbsp;/&nbsp; Customer Map</div>
        <div class="m-body">
          <div class="m-reg">
            <div class="m-h">UK Regions</div>
            <div class="m-card c1"><b>Scotland</b><span>238 customers</span></div>
            <div class="m-card c2"><b>North East</b><span>0 customers</span></div>
            <div class="m-card c3"><b>North West</b><span>127 customers</span></div>
            <div class="m-card c4"><b>Wales</b><span>73 customers</span></div>
            <div class="m-card c5"><b>Midlands</b><span>160 customers</span></div>
            <div class="m-card c6"><b>London</b><span>153 customers</span></div>
            <div class="m-card c7"><b>South East</b><span>136 customers</span></div>
            <div class="m-card c8"><b>South West</b><span>66 customers</span></div>
            <div class="m-card c4"><b>Ireland</b></div>
          </div>
          <svg class="m-map" viewBox="730 315 660 530" preserveAspectRatio="none">
            <rect x="730" y="315" width="660" height="530" fill="#1b2230"/>
            <path d="M1075 345l15 25-20 15 35 45-20 30-10 30 20 25-15 25 35 40 25 50 35 30 30 20-10 40-30 15 10 15-60 20-70 10-25 15-20 15 40-45-15-10 25-30-30-15 15-35-25-20 20-25-15-30-25 0 15-30-35-20-25-30-5-30 25-15 10-30 30-25 20-10z" fill="#2e3a4b"/>
            <path d="M1010 540l-25 15 5 20 15 5-5 20-25 5-10 30 5 25-20 20-45 15-25 20-15-20 25-15-20-25 15-25-5-25-20-25 30-15 35 0 5-15 35-5 30 0 10 15z" fill="#2e3a4b"/>
            <path d="M1290 730l30-60 50-40 20-15v165l-60 15-30-25z" fill="#2b3645"/>
            <path d="M1170 845l50-35 60 15 30 20z" fill="#2b3645"/>
            <path d="M975 410l10-15-5 40-10 30-5-30z" fill="#2e3a4b"/>
            <g font-size="11" font-family="Inter,sans-serif" fill="#8c97a6" text-anchor="middle"><text x="1045" y="462">SCOTLAND</text><text x="1085" y="560">United</text><text x="1085" y="570">Kingdom</text><text x="935" y="650">Ireland</text><text x="1110" y="697">ENGLAND</text><text x="1320" y="702">Netherlands</text><text x="1040" y="702">WALES</text></g>
            <g fill="#62a85a" stroke="#b9d8b5" stroke-width="2"><circle cx="985" cy="402" r="6"/><circle cx="999" cy="590" r="6"/><circle cx="905" cy="657" r="6"/><circle cx="969" cy="692" r="6"/><circle cx="898" cy="704" r="6"/></g>
            <g fill="#c9ced6"><circle cx="1040" cy="520" r="3"/><circle cx="1090" cy="515" r="3"/><circle cx="1120" cy="560" r="3"/><circle cx="1090" cy="650" r="3"/><circle cx="1150" cy="720" r="3"/><circle cx="1090" cy="722" r="3"/><circle cx="1200" cy="670" r="3"/><circle cx="1040" cy="595" r="3"/></g>
            <rect x="1278" y="768" width="106" height="70" fill="#1b2230" stroke="#ddd" stroke-width="3"/>
            <rect x="1284" y="782" width="94" height="50" fill="#2a3340"/>
            <circle cx="1354" cy="760" r="10" fill="#dfe3e8"/>
            <rect x="1342" y="322" width="24" height="24" fill="#f4f4f4"/>
          </svg>
        </div>
      </div>
    </div>
  </div>
</aside>
</body>
</html>
```
FILE: styles.css
```css
* { box-sizing: border-box; }
html, body { margin: 0; padding: 0; width: 3456px; height: 2234px; overflow: hidden; }
body { font-family: Inter, "Liberation Sans", sans-serif; background: #1b1f2a; color: #fff; position: relative; }
.sprite { display: none; }
i { display: block; font-style: normal; }
a { display: flex; }

/* browser chrome */
.chrome { height: 318px; background: #d3e2fb; }
.black-bar { height: 74px; background: #000; }
.tabstrip { height: 82px; display: flex; align-items: flex-start; position: relative; }
.traffic { width: 150.3px; flex: none; height: 82px; display: flex; gap: 16px; align-items: center; padding: 0 0 0 26px; margin-top: -1px; }
.tl { width: 24px; height: 24px; border-radius: 50%; }
.red { background: #ee6a5f; } .grey { background: #c8cfdc; } .green { background: #61c654; }
.tab { width: 153.7px; flex: none; height: 32px; margin-top: 26px; padding-left: 22px; display: flex; align-items: center; gap: 16px; border-right: 2px solid #adc6f5; font-size: 24px; color: #474747; }
.fav { width: 32px; height: 32px; flex: none; display: block; }
.tab-title { display: block; width: 62px; flex: none; white-space: nowrap; -webkit-mask-image: linear-gradient(90deg, #000 66%, transparent); mask-image: linear-gradient(90deg, #000 66%, transparent); }
.tab-active { width: 140px; height: 68px; margin-top: 14px; padding: 0 0 0 19px; background: #fff; border: 0; border-radius: 20px 20px 0 0; position: relative; margin-left: 2.700px; gap: 12px; color: #1f1f1f; }
.tab-active::before, .tab-active::after { content: ""; position: absolute; bottom: 0; width: 20px; height: 20px; }
.tab-active::before { left: -20px; background: radial-gradient(circle at 0 0, transparent 20px, #fff 20.500px); }
.tab-active::after { right: -20px; background: radial-gradient(circle at 100% 0, transparent 20px, #fff 20.500px); }
.tab-title-active { width: 12px; }
.tab-x { font-size: 20px; margin-left: 12px; margin-top: -2px; color: #1f1f1f; font-weight: 700; }
.tab-claude { width: 157px; padding-left: 28px; }
.tab-plus { font-size: 44px; font-weight: 300; color: #474747; line-height: 32px; margin: 24px 0 0 22px; }
.tab-menu { margin: 14px 12px 0 auto; width: 56px; height: 56px; border-radius: 20px; background: #edf2fa; display: flex; align-items: center; justify-content: center; }
.tab-menu-ico { width: 20px; height: 20px; }

.toolbar { height: 92px; background: #fff; border-radius: 24px 24px 0 0; display: flex; align-items: center; padding-left: 8px; }
.navbtn { width: 72px; height: 48px; flex: none; display: flex; align-items: center; justify-content: center; }
.nav-ico { width: 32px; height: 32px; }
.urlbar { flex: none; width: 2688px; margin-left: 16px; height: 68px; border-radius: 34px; background: #edf2fa; display: flex; align-items: center; padding-left: 10px; }
.tune { width: 48px; height: 48px; border-radius: 50%; background: #fff; display: flex; align-items: center; justify-content: center; }
.tune-ico { width: 30px; height: 30px; }
.url { margin-left: 17px; font-size: 28px; color: #1f1f1f; flex: 1; }
.tb-star { width: 32px; height: 32px; margin-right: 32px; }
.ext-row { display: flex; align-items: center; padding-left: 15px; }
.ext { width: 72px; height: 48px; display: flex; align-items: center; justify-content: center; }
.ext-colorpick { width: 48px; height: 48px; border-radius: 50%; background: #fff; box-shadow: 0 3px 6px rgba(0,0,0,.3); display: flex; align-items: center; justify-content: center; }
.tb-sep { width: 2px; height: 32px; background: #d3e3fd; margin: 0 17px; }
.acct { width: 40px; height: 40px; border-radius: 50%; background: #7f95a8; color: #fff; font-size: 22px; display: flex; align-items: center; justify-content: center; }
.dots { display: flex; flex-direction: column; gap: 7px; }
.dots i { width: 6px; height: 6px; border-radius: 50%; background: #474747; }

.bookmarks { height: 68px; background: #fff; border-bottom: 2px solid #e0e0e0; display: flex; align-items: center; padding: 0 30px 0 38px; font-size: 23.6px; color: #474747; }
.apps { width: 28px; height: 28px; flex: none; }
.bm-sep { width: 2px; height: 32px; background: #d3e3fd; margin: 0 34px 0 31px; flex: none; }
.bm { display: flex; align-items: center; gap: 16px; margin-right: 36px; white-space: nowrap; flex: none; }
.fav-sh { width: 28px; height: 32px; flex: none; }
.bm-deals { gap: 15px; margin-right: 35px; }
.bm-shop { gap: 14px; margin-right: 31px; }
.bm-long { width: 309px; margin-right: 0; gap: 14px; }
.bm-tight { width: 307.5px; }
.bm-end { margin-left: auto; display: flex; align-items: center; }
.bm-end .bm { margin: 0; }
.bm-more { font-size: 32px; margin-right: 4px; }

/* app */
.app { height: 1916px; display: flex; }
.sidebar { width: 560px; flex: none; background: #1b1f2a; border-right: 2px solid #262a35; display: flex; flex-direction: column; height: 1916px; }
.side-top { height: 146px; border-bottom: 2px solid #252934; display: flex; align-items: center; padding: 0 0 0 66px; gap: 93px; }
.top-plain { margin-right: -4px; }
.top-btn { width: 80px; height: 80px; border-radius: 20px; background: #252833; border: 2px solid #353844; display: flex; align-items: center; justify-content: center; }
.top-plain { background: none; border: 0; }
.ico-bell { width: 36px; height: 40px; fill: #b5b7bc; }
.ico-top { width: 36px; height: 36px; fill: #bdbfc3; }
.profile { height: 194px; border-bottom: 2px solid #252934; display: flex; align-items: center; gap: 33px; padding: 0 0 0 48px; flex: none; }
.avatar { width: 96px; height: 96px; border-radius: 50%; background: linear-gradient(135deg, #eba53c, #e87a36); box-shadow: 0 4px 16px rgba(232,150,60,.3); font-size: 40px; font-weight: 600; display: flex; align-items: center; justify-content: center; }
.p-name { font-size: 31.8px; font-weight: 600; line-height: 40px; margin-top: -2px; }
.p-role { font-size: 27.2px; color: #80838c; line-height: 36px; margin-top: 10px; }
.nav { flex: 1; min-height: 0; overflow: hidden; padding-top: 6px; position: relative; }
.sub { height: 90.500px; width: 536px; display: flex; align-items: center; padding-left: 80px; font-size: 27.2px; color: #e9eaec; }
.dot { width: 8px; height: 8px; border-radius: 50%; background: #5e626c; flex: none; margin-right: 24px; }
.sub-ico { width: 28px; height: 28px; fill: #7d7f87; flex: none; margin-right: 29px; }
.sub-active { background: #1f2231; }
.sub-active .dot { width: 12px; height: 12px; background: #6366f1; margin-right: 20px; }
.group { height: 100px; width: 536px; margin-top: 8px; display: flex; align-items: center; padding-left: 50px; font-size: 29.8px; font-weight: 500; color: #fff; }
.group.open { background: #21253e; border-left: 6px solid #6366f1; border-radius: 4px 0 0 4px; padding-left: 44px; }
.group span { flex: 1; }
.g-ico { width: 36px; height: 32px; fill: #fff; flex: none; margin-right: 35px; }
.chev { width: 14px; height: 24px; fill: #686a74; flex: none; margin-right: 53px; }
.nav-thumb { position: absolute; left: 542px; top: 267px; width: 11px; height: 727px; border-radius: 6px; background: #2c2f38; }
.side-foot { height: 188px; flex: none; border-top: 2px solid #2a2d37; display: flex; align-items: center; padding: 4px 0 0 152px; gap: 15px; }
.logo-mark { width: 54px; height: 52px; }
.logo-text { font-size: 62px; color: #eeefea; line-height: 1; font-family: Roboto, Inter, sans-serif; font-weight: 300; }

/* main */
.main { flex: 1; min-width: 0; display: flex; flex-direction: column; background: linear-gradient(135deg, #1a1f2a 0%, #2c3e50 50%, #34495e 100%); }
.crumbs { height: 98px; flex: none; background: rgba(26,31,42,.72); border-bottom: 2px solid #2a2f3a; display: flex; align-items: center; padding-left: 64px; font-size: 28px; }
.crumb-home { width: 32px; height: 28px; fill: #9ea1a6; margin-right: 16px; }
.crumb-link { color: #e6e7e9; padding-top: 2px; }
.crumb-sep { color: #555a64; margin: 0 6px 0 22px; padding-top: 2px; }
.crumb-now { font-weight: 500; background: #262f3a; border-radius: 10px; height: 60px; width: 122px; display: flex; align-items: center; justify-content: center; padding-top: 2px; }
.scroller { flex: 1; min-height: 0; display: flex; overflow: hidden; }
.content { flex: 1; min-width: 0; padding: 98px 96px 0 96px; }
.vbar { width: 20px; flex: none; background: #10141b; }
.vthumb { height: 363px; border-radius: 10px; background: #2a2e35; }
.title-row { height: 90px; display: flex; align-items: center; justify-content: space-between; }
.title { margin: 4px 0 0; font-size: 64px; line-height: 1; font-weight: 700; letter-spacing: -1.300px; background: linear-gradient(135deg, #8bd3e6, #61a8a8); -webkit-background-clip: text; background-clip: text; color: transparent; }
.refresh { width: 102px; height: 90px; border: 0; padding: 0; border-radius: 16px; background: linear-gradient(135deg, #8bd0e0, #6bb0b0); box-shadow: 0 6px 20px rgba(121,199,216,.25); display: flex; align-items: center; justify-content: center; }
.emoji-r { width: 38px; height: 38px; }
.stats { margin-top: 48px; display: grid; grid-template-columns: repeat(4, 1fr); gap: 41px; }
.stat { height: 179px; background: #1a1f2a; border: 2px solid #2a2e3a; border-left-width: 6px; border-radius: 24px; display: flex; align-items: center; gap: 33px; padding-left: 32px; }
.s-blue { border-left-color: #79c7dc; } .s-teal { border-left-color: #61a8a8; } .s-green { border-left-color: #6fbb8b; } .s-amber { border-left-color: #f5b942; }
.stat-ico { width: 100px; height: 100px; border-radius: 24px; background: #242c37; display: flex; align-items: center; justify-content: center; flex: none; }
.s-teal .stat-ico { background: #1f2a33; } .s-green .stat-ico { background: #222b30; } .s-amber .stat-ico { background: #2c2c2e; }
.emoji { width: 32px; height: 32px; }
.stat-val { font-size: 48px; font-weight: 700; line-height: 52px; margin-top: -2px; }
.stat-lab { font-size: 26px; font-weight: 500; letter-spacing: .75px; line-height: 32px; margin-top: 8px; color: #eef0f3; }
.filters { margin-top: 65px; display: flex; align-items: center; gap: 32px; }
.search { flex: 1; height: 104px; border: 4px solid #4a5260; border-radius: 24px; background: rgba(255,255,255,.06); display: flex; align-items: center; padding-left: 28px; gap: 36px; }
.search-ico { width: 32px; height: 32px; fill: #7a8190; }
.search-ph { font-size: 32px; color: #6f7787; padding-top: 3px; }
.status { width: 280px; height: 100px; border: 2px solid #485160; border-radius: 24px; background: rgba(255,255,255,.04); display: flex; align-items: center; padding: 3px 0 0 34px; font-size: 31px; color: #eef0f3; }
.table { margin-top: 48px; background: #1a1e2a; border-radius: 32px 32px 0 0; border: 2px solid #1e2530; border-bottom: 0; overflow: hidden; }
.row { display: grid; grid-template-columns: 311px 1529px 312px 1fr 64px; align-items: center; height: 161px; padding: 0 49px; background: #1a1e2a; border-bottom: 2px solid #262a36; }
.row.alt { background: #1e222d; }
.row.hover { background: #262b36; box-shadow: inset 4px 0 0 #7cc8dc; border-bottom: 2px solid; border-image: linear-gradient(90deg, #7cc8dc, #62a9ad 45%, #2c3440 95%) 1; }
.row.head { height: 106px; background: #2d3440; border-bottom: 6px solid #3a4150; font-size: 24px; font-weight: 600; letter-spacing: 1.400px; color: #f2f3f5; padding-top: 2px; }
.ono { font-family: "DejaVu Sans Mono", "Liberation Mono", monospace; font-size: 29px; color: #f4f5f6; -webkit-text-stroke: .4px #f4f5f6; }
.cust { display: flex; align-items: center; gap: 25px; font-size: 28px; font-weight: 500; }
.cav { width: 72px; height: 72px; border-radius: 20px; background: linear-gradient(135deg, #8fd2e4, #69aeaf); display: flex; align-items: center; justify-content: center; font-weight: 600; }
.when { padding-top: 8px; }
.d { font-size: 28px; color: #dfe3ea; line-height: 34px; margin-top: -3px; }
.t { font-size: 22px; color: #5c6578; line-height: 28px; margin-top: 11px; }
.amt { font-size: 32px; font-weight: 600; color: #5fd07e; }
.exp { width: 64px; height: 64px; border-radius: 16px; background: #262a35; border: 2px solid #353a48; display: flex; align-items: center; justify-content: center; }
.exp svg { width: 30px; height: 30px; }

/* picture-in-picture preview */
.pip { position: absolute; left: 3070px; top: 1970px; width: 362px; height: 240px; background: #fff; border-radius: 12px; padding: 8px; }
.pip-in { width: 100%; height: 100%; display: flex; flex-direction: column; overflow: hidden; background: #1b2230; border: 1px solid #999; color: #cfd3d9; font-size: 3px; filter: blur(.3px); }
.m-black { height: 6px; background: #000; flex: none; }
.m-tabs { height: 8px; background: #d3e2fb; display: flex; align-items: center; gap: 2px; padding-left: 2px; flex: none; }
.m-r, .m-y, .m-g { width: 2px; height: 2px; border-radius: 50%; }
.m-r { background: #ee6a5f; } .m-y { background: #c8cfdc; } .m-g { background: #61c654; }
.m-tabline { flex: 1; height: 3px; margin-left: 2px; background: repeating-linear-gradient(90deg, #5f6f96 0 3px, #a9b8d8 3px 10px, #d3e2fb 10px 15px); }
.m-url { height: 8px; background: #fff; padding: 1px 40px 1px 22px; flex: none; }
.m-urlin { display: block; height: 6px; border-radius: 3px; background: #edf2fa; color: #333; padding-left: 6px; line-height: 6px; }
.m-bm { height: 8px; background: #fff; color: #555; line-height: 8px; padding-left: 10px; white-space: nowrap; overflow: hidden; flex: none; }
.m-app { flex: 1; min-height: 0; display: flex; }
.m-side { width: 55px; flex: none; background: #1b1f2a; position: relative; border-right: 1px solid #262a35; }
.m-top { height: 14px; display: flex; align-items: center; justify-content: space-around; padding: 0 4px; border-bottom: 1px solid #252934; }
.m-ti { width: 4px; height: 4px; fill: #aaa; }
.m-prof { display: flex; gap: 3px; align-items: center; padding-left: 4px; height: 20px; font-size: 3px; border-bottom: 1px solid #252934; }
.m-av { width: 10px; height: 10px; border-radius: 50%; background: #eb8f35; }
.m-n { color: #ddd; } .m-rr { color: #777; font-size: 2px; }
.m-g-row { height: 10px; background: #21253e; color: #d5d8de; line-height: 10px; padding-left: 12px; margin-top: 2px; width: 52px; }
.m-s { height: 9px; color: #aab; line-height: 9px; padding-left: 15px; font-size: 2.500px; }
.m-o { height: 10px; color: #d5d8de; line-height: 10px; padding-left: 15px; }
.m-logo { position: absolute; left: 0; right: 0; bottom: 0; height: 18px; line-height: 18px; background: #1b1f2a; text-align: center; color: #ddd; font-size: 6px; font-weight: 300; }
.m-right { flex: 1; min-width: 0; display: flex; flex-direction: column; background: #1f2734; }
.m-crumb { height: 14px; flex: none; line-height: 14px; padding-left: 6px; color: #aab; background: #1c212c; }
.m-body { flex: 1; min-height: 0; display: flex; }
.m-reg { width: 68px; flex: none; background: #1d2330; padding: 7px 3px 0 3px; overflow: hidden; border-right: 1px solid #2c3340; }
.m-h { color: #5fb5b5; font-size: 4.500px; font-weight: 600; margin-bottom: 4px; }
.m-card { height: 17px; margin-bottom: 2px; background: #1a1f2a; border-left: 1px solid #3b79b5; padding: 2px 0 0 4px; display: flex; flex-direction: column; gap: 2px; color: #aaa; font-size: 2.500px; }
.m-card b { color: #d8dbe0; font-size: 3.500px; font-weight: 500; }
.c2 { border-color: #d9792b; } .c3 { border-color: #3fa04a; } .c4 { border-color: #b83c3c; } .c5 { border-color: #8050b0; } .c6 { border-color: #8a5a3a; } .c7 { border-color: #a04aa0; } .c8 { border-color: #555; }
.m-map { flex: 1; min-width: 0; height: 100%; display: block; }
```
